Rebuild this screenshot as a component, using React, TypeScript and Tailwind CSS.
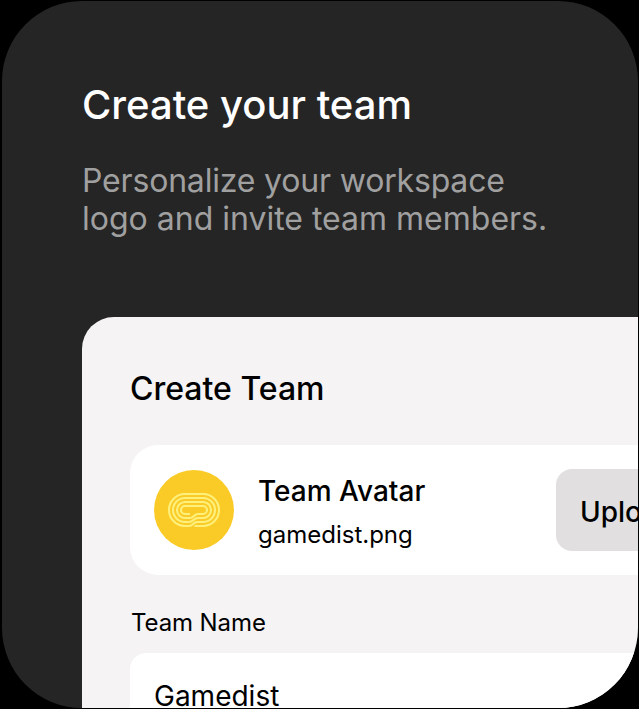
function TeamLogo() {
  return (
    <div className="flex size-20 shrink-0 items-center justify-center rounded-full bg-[#facb26]">
      <svg width="54" height="35" viewBox="0 0 54 35" fill="none" stroke="#fff07c" strokeWidth="2.1" strokeLinejoin="round">
        <path d="M27.500 33H36A16 16 0 0 0 36 1H18A16 16 0 0 0 18 33H22Q24.500 33 26 31.200T30 29H36A12 12 0 0 0 36 5H18A12 12 0 0 0 18 29H22Q24.500 29 26.500 27T31 25H36A8 8 0 0 0 36 9H18A8 8 0 0 0 18 25H23Q25 25 27 23T31 21H36A4 4 0 0 0 36 13H18A4 4 0 0 0 18 21H23" />
      </svg>
    </div>
  );
}

export default function App() {
  return (
    <div className="h-[709px] w-[639px] overflow-hidden bg-black pt-px pl-[2px] font-['Inter',sans-serif]">
      <main className="h-[707px] w-[636px] overflow-hidden rounded-[80px] bg-[#252525] pt-20 pl-20">
        <h1 className="text-[40px] leading-[48px] font-medium whitespace-nowrap text-white">Create your team</h1>
        <p className="mt-[33px] h-[77px] text-[32px] leading-[38px] whitespace-nowrap text-[#a0a0a0]">
          <span className="tracking-[-0.18px]">Personalize your workspace</span>
          <br />
          logo and invite team members.
        </p>
        <section className="mt-[78px] h-[420px] w-[700px] rounded-tl-[32px] bg-[#f5f3f4] pt-[52px] pl-12 text-black">
          <h2 className="text-[32px] leading-10 font-medium whitespace-nowrap">Create Team</h2>
          <div className="mt-9 flex h-[130px] items-center rounded-l-[28px] bg-white pl-6">
            <TeamLogo />
            <div className="mt-1 ml-6 w-[298px] shrink-0">
              <div className="text-[28px] leading-[44px] font-medium">Team Avatar</div>
              <div className="text-[24px] leading-[43px]">gamedist.png</div>
            </div>
            <div className="flex h-[82px] w-[170px] shrink-0 items-center rounded-2xl bg-[#e1dfe0] pt-1 pl-6 text-[28px] font-medium">Upload</div>
          </div>
          <div className="mt-8 pl-px text-[24px] leading-8 tracking-[-0.1px]">Team Name</div>
          <div className="mt-3.5 flex h-[82px] items-center rounded-l-2xl bg-white pt-[3px] pl-6 text-[28px]">Gamedist</div>
        </section>
      </main>
    </div>
  );
}
